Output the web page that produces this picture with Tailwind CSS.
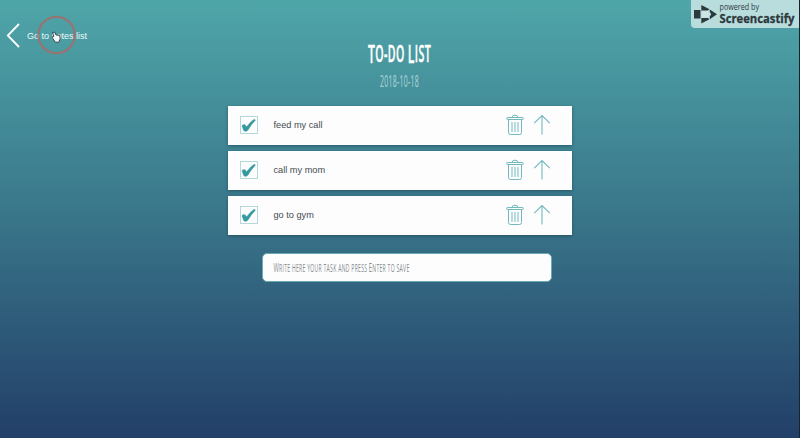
<!DOCTYPE html>
<html lang="en">
<head>
<meta charset="utf-8">
<title>To-do List</title>
<script src="https://cdn.jsdelivr.net/npm/@tailwindcss/browser@4"></script>
</head>
<body class="relative h-[438px] w-[800px] overflow-hidden border-r border-[#15252e] bg-linear-to-b from-[#4fa6a9] via-[#397589] to-[#233f68] font-['Liberation_Sans',sans-serif]">
<svg class="hidden">
  <symbol id="check" viewBox="0 0 14 14"><path d="M.8 7.2Q2.3 5.6 3.8 6.4L5.2 8.2Q8.4 3.5 12.2 1.1L13.6 1.9Q9.3 6.4 6.6 11.3Q4.7 13.6 2.6 11.9Z" fill="#36999f" stroke="#36999f" stroke-width=".3"/></symbol>
  <symbol id="trash" viewBox="0 0 18 22"><g fill="none" stroke="#72b9be" stroke-width="1"><path d="M6 3.5Q6 1.2 9 1.2T12 3.5"/><rect x=".8" y="3.5" width="16.4" height="2" rx=".5"/><path d="M2.5 5.5V18.5Q2.5 20.5 4.5 20.5H13.5Q15.5 20.5 15.5 18.5V5.5M6 8V18M9 8V18M12 8V18"/></g></symbol>
  <symbol id="up" viewBox="0 0 18 22"><path d="M9 20.5V1.5M1.2 9.2L9 1.5L16.8 9.2" fill="none" stroke="#72b9be" stroke-width="1.1"/></symbol>
</svg>
<a class="absolute left-[6px] top-[22px] flex items-center text-white">
  <svg class="h-[27px] w-[15px]" viewBox="0 0 15 27"><path d="M13 2L1.8 13.5L13 25" fill="none" stroke="white" stroke-width="1.8"/></svg>
  <svg class="ml-[5px] h-[16px] w-[66px] overflow-visible" viewBox="0 0 66 16"><text x="1" y="11.3" font-size="9.3" textLength="60" lengthAdjust="spacingAndGlyphs" fill="#edf8f8">Go to notes list</text></svg>
</a>
<svg class="absolute left-[36px] top-[14px] h-[42px] w-[42px]" viewBox="0 0 42 42"><circle cx="20.5" cy="21" r="18.2" fill="none" stroke="#a26d6b" stroke-opacity=".85" stroke-width="2.2"/><path d="M18.5 27L15.8 23L17.8 22.4L16.6 18.5L18.6 18.1L20 21L23.7 21.2L24.2 25L22.7 28.2H19.3Z" fill="#f5f9f8" stroke="#344b4d" stroke-width="1"/></svg>
<div class="absolute right-0 top-0 flex h-[28px] w-[108px] rounded-bl bg-[#b9dddd] text-[#2c393d]">
  <svg class="h-full w-full overflow-visible" viewBox="0 0 108 28" font-family="Open Sans" fill="#2c393d"><path d="M3 10H9.5V18.5H3ZM10.3 5L18.5 9.2L16.8 10.4H10.3ZM10.3 23.5L18.5 19.2L16.8 18H10.3ZM18.8 9.4L26 14.3L18.8 19.2V16.5L20.2 14.3L18.8 12Z"/><path d="M11 11V17.5H17L19 14.3L17 11Z" fill="#cce5e5"/><text x="28.5" y="10.3" font-size="8.5" textLength="39.5" lengthAdjust="spacingAndGlyphs">powered by</text><text x="28.5" y="23" font-size="12.5" font-weight="700" stroke="#2c393d" stroke-width=".3" textLength="75" lengthAdjust="spacingAndGlyphs">Screencastify</text></svg>
</div>
<main class="flex flex-col items-center pt-[38px]">
  <h1 class="h-[32px] w-[64px]"><svg class="h-full w-full overflow-visible uppercase" viewBox="0 0 64 32" font-family="Open Sans" font-weight="600" fill="white"><text transform="scale(.46 1)" x="0" y="24.5" textLength="137" letter-spacing=".8" lengthAdjust="spacingAndGlyphs" font-size="26" stroke="white" stroke-width=".5">T<tspan font-size="22.5">o-do </tspan>L<tspan font-size="22.5">ist</tspan></text></svg></h1>
  <p class="h-[36px] w-[40px]"><svg class="h-full w-full overflow-visible" viewBox="0 0 40 36" font-family="Open Sans" fill="#a4d0d3"><text x="0" y="17" font-size="16" letter-spacing=".7" textLength="39" lengthAdjust="spacingAndGlyphs" stroke="#a4d0d3" stroke-width=".2">2018-10-18</text></svg></p>
  <ul class="flex w-[344px] flex-col gap-[6px] text-[9.2px] text-[#434b4e]">
    <li class="flex h-[39px] items-center bg-[#fdfdfe] pl-[12px] shadow-[0_1px_3px_#173d4a99]"><span class="-mt-px flex size-[18px] items-center justify-center border border-[#b5d8dc]"><svg class="size-[15px] shrink-0"><use href="#check"/></svg></span><span class="ml-[16px] flex-1 pt-px">feed my call</span><svg class="-mt-[2px] mr-[9px] h-[22px] w-[18px]"><use href="#trash"/></svg><svg class="-mt-[2px] mr-[21px] h-[22px] w-[18px]"><use href="#up"/></svg></li>
    <li class="flex h-[39px] items-center bg-[#fdfdfe] pl-[12px] shadow-[0_1px_3px_#173d4a99]"><span class="-mt-px flex size-[18px] items-center justify-center border border-[#b5d8dc]"><svg class="size-[15px] shrink-0"><use href="#check"/></svg></span><span class="ml-[16px] flex-1 pt-px">call my mom</span><svg class="-mt-[2px] mr-[9px] h-[22px] w-[18px]"><use href="#trash"/></svg><svg class="-mt-[2px] mr-[21px] h-[22px] w-[18px]"><use href="#up"/></svg></li>
    <li class="flex h-[39px] items-center bg-[#fdfdfe] pl-[12px] shadow-[0_1px_3px_#173d4a99]"><span class="-mt-px flex size-[18px] items-center justify-center border border-[#b5d8dc]"><svg class="size-[15px] shrink-0"><use href="#check"/></svg></span><span class="ml-[16px] flex-1 pt-px">go to gym</span><svg class="-mt-[2px] mr-[9px] h-[22px] w-[18px]"><use href="#trash"/></svg><svg class="-mt-[2px] mr-[21px] h-[22px] w-[18px]"><use href="#up"/></svg></li>
  </ul>
  <div class="ml-[15px] mt-[18px] h-[29px] w-[290px] rounded-[5px] border border-[#68a9b3] bg-[#fdfdfe] pl-[10px]">
    <svg class="h-full w-[140px] overflow-visible uppercase" viewBox="0 0 140 27" font-family="Open Sans" fill="#858b8d"><text transform="scale(.5 1)" x="1" y="17.8" font-size="13" letter-spacing=".6" textLength="272" lengthAdjust="spacingAndGlyphs">W<tspan font-size="11.5">rite here your task and press </tspan>E<tspan font-size="11.5">nter to save</tspan></text></svg>
  </div>
</main>
</body>
</html>
